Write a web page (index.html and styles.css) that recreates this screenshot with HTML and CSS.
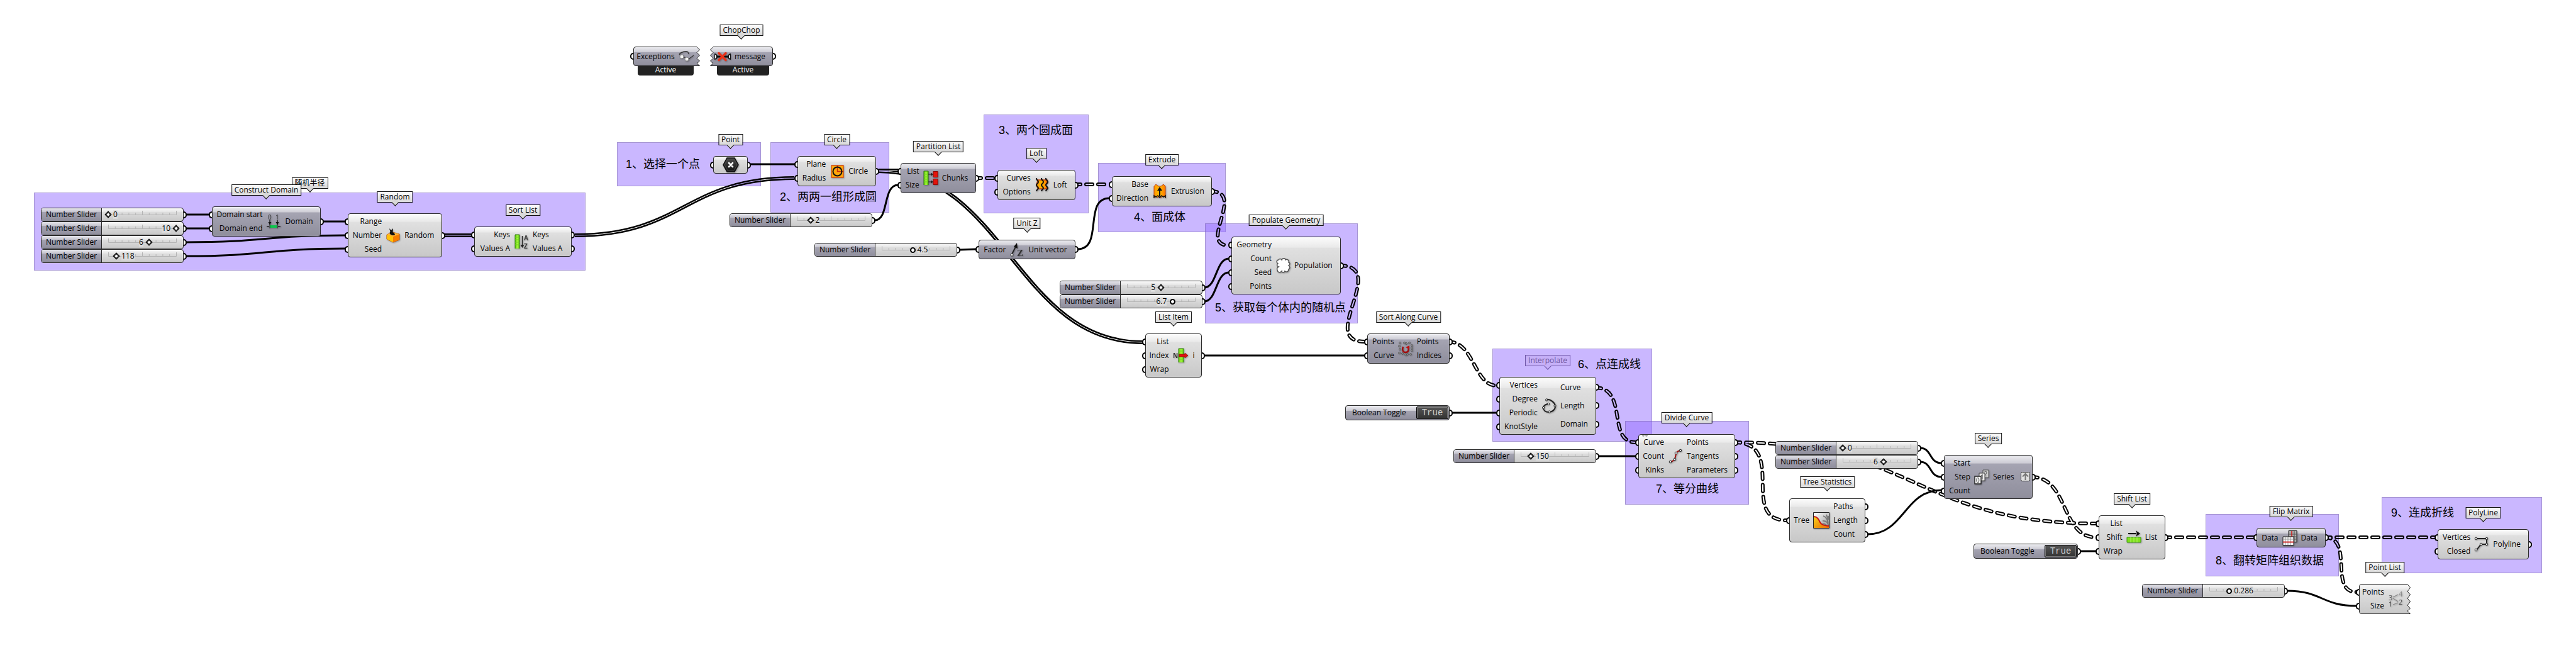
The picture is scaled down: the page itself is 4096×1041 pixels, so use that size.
FILE: index.html
```html
<!DOCTYPE html>
<html lang="zh-CN">
<head>
<meta charset="utf-8">
<meta name="viewport" content="width=device-width, initial-scale=1">
<title>Grasshopper definition</title>
<link rel="stylesheet" href="styles.css">
</head>
<body>
<svg class="defs" aria-hidden="true">
  <defs>
    <linearGradient id="g-dark" x1="0" y1="0" x2="0" y2="1">
      <stop offset="0" stop-color="#ececf0"/><stop offset=".28" stop-color="#cccbd4"/>
      <stop offset=".29" stop-color="#a5a4b2"/><stop offset="1" stop-color="#8f8e9c"/>
    </linearGradient>
    <linearGradient id="g-light" x1="0" y1="0" x2="0" y2="1">
      <stop offset="0" stop-color="#fcfcfc"/><stop offset=".18" stop-color="#e9e9e9"/>
      <stop offset=".19" stop-color="#e0e0e0"/><stop offset="1" stop-color="#c8c8c8"/>
    </linearGradient>
    <linearGradient id="g-green" x1="0" y1="0" x2="1" y2="0">
      <stop offset="0" stop-color="#5fc70c"/><stop offset=".5" stop-color="#a4f83a"/><stop offset="1" stop-color="#5fc70c"/>
    </linearGradient>
    <linearGradient id="g-orange" x1="0" y1="0" x2="1" y2="0">
      <stop offset="0" stop-color="#ff9a00"/><stop offset=".5" stop-color="#ffb700"/><stop offset="1" stop-color="#ff7a00"/>
    </linearGradient>
    <linearGradient id="g-hex" x1="0" y1="0" x2="0" y2="1">
      <stop offset="0" stop-color="#4a4a4a"/><stop offset="1" stop-color="#111"/>
    </linearGradient>
    <linearGradient id="g-sky" x1="0" y1="0" x2="1" y2="1">
      <stop offset="0" stop-color="#fff"/><stop offset="1" stop-color="#999"/>
    </linearGradient>
    <linearGradient id="g-sun" x1="0" y1="0" x2="1" y2="1">
      <stop offset="0" stop-color="#f6d21c"/><stop offset="1" stop-color="#e86a00"/>
    </linearGradient>
  </defs>
  <symbol id="ticks" viewBox="0 0 109 7">
    <path d="M.5 0V6.5H108.5V0M54.5 0V6M11.3 3v3M22.1 3v3M32.9 3v3M43.7 3v3M65.3 3v3M76.1 3v3M86.9 3v3M97.7 3v3" fill="none" stroke="#b4b4b4"/>
  </symbol>
  <symbol id="i-random" viewBox="0 0 24 24">
    <path d="M2 11l9-4 11 3v9l-10 4-10-5z" fill="#ff9d00" stroke="#b04800"/>
    <path d="M2 11l10 3v9l-10-5z" fill="#ffc107"/><path d="M12 14l10-4v9l-10 4z" fill="#f57c00"/>
    <path d="M2 11l9-4 11 3-10 4z" fill="#ffb338"/>
    <path d="M6 1l3 3 3-3-.5 6c3 1 4 4 3 5h-4c-2-1-4-2-4-4l1-2z" fill="#111"/>
  </symbol>
  <symbol id="i-glasses" viewBox="0 0 24 24">
    <path d="M1 8C4 5 12 2 15 5l1 3M1 8l3 3M9 13l4 2M16 16l8-6" fill="none" stroke="#333" stroke-width="1.300"/>
    <circle cx="5" cy="12" r="3" fill="#f2f2f2" stroke="#888"/><circle cx="13" cy="16" r="3" fill="#f2f2f2" stroke="#888"/>
  </symbol>
  <symbol id="i-chop" viewBox="0 0 26 24">
    <path d="M2 12h22" stroke="#111" stroke-width="3"/>
    <path d="M0 8a4 4 0 0 1 0 8zM26 8a4 4 0 0 0 0 8z" fill="#fff" stroke="#111" stroke-width="2"/>
    <path d="M7 6.500l11 11M18 6.500l-11 11" stroke="#e8321a" stroke-width="3.500" stroke-linecap="round"/>
  </symbol>
  <symbol id="i-point" viewBox="0 0 26 24">
    <path d="M7 1h12l6 11-6 11H7L1 12z" fill="url(#g-hex)" stroke="#111" stroke-width="1.500"/>
    <path d="M8 3h10l5 9-5 9H8l-5-9z" fill="none" stroke="#555" stroke-width=".7"/>
    <path d="M10 9l6 6M16 9l-6 6" stroke="#fff" stroke-width="2.600" stroke-linecap="round"/>
  </symbol>
  <symbol id="i-circle" viewBox="0 0 24 24">
    <path d="M3 3h19v19H3z" fill="#ffa60a" stroke="#d24a0c" stroke-width="1.300"/>
    <path d="M12.500 3v9.500H22" fill="none" stroke="#c62d0c" stroke-width="1.500"/>
    <circle cx="12.500" cy="12.500" r="7" fill="none" stroke="#111" stroke-width="2"/>
  </symbol>
  <symbol id="i-partition" viewBox="0 0 24 24">
    <path d="M1 1h7v22H1z" fill="url(#g-green)"/><path d="M1 23V1h7v22" fill="none" stroke="#2c7a0c"/>
    <path d="M1 6h7M1 10h7M1 14h7M1 18h7" stroke="#6fd020"/>
    <path d="M16 1.500h7v9h-7zM16 13.500h7v9h-7z" fill="#e3120b" stroke="#8c0a06"/>
    <path d="M8 6h5M8 18h5" stroke="#222"/><path d="M12 3.500l4 2.500-4 2.500zM12 15.500l4 2.500-4 2.500z" fill="#222"/>
  </symbol>
  <symbol id="i-loft" viewBox="0 0 24 24">
    <path d="M5 4h15c1 3-2 5-2 8 0 2 2 3 2 6H5c1-2-2-3-2-6s2-4 2-8z" fill="url(#g-orange)" stroke="#c2410c" stroke-width="1.500"/>
    <path d="M3 1c-1 3 3 3 3 6s-3 3-3 5 3 3 3 5-3 2-3 5M11 1c-1 3 3 3 3 6s-3 3-3 5 3 3 3 5-3 2-3 5M18 1c-1 3 3 3 3 6s-3 3-3 5 3 3 3 5-3 2-3 5" fill="none" stroke="#111" stroke-width="2"/>
  </symbol>
  <symbol id="i-extrude" viewBox="0 0 24 24">
    <path d="M3 4l3-3 4 3h4l4-3 3 3v18l-3-3-4 3-3-2-3 2-3-3-2 3z" fill="url(#g-orange)" stroke="#c2410c"/>
    <path d="M3 23v-4l3 2 3-2 3 3 3-3 3 2 3-2v4" fill="none" stroke="#111" stroke-width="1.500"/>
    <path d="M12 20V9" stroke="#111" stroke-width="2"/><path d="M8 11h8l-4-6z" fill="#111"/>
  </symbol>
  <symbol id="i-populate" viewBox="0 0 24 24">
    <path d="M5 3c1-2 4-2 5 0 1-3 6-3 6 0 3-2 6 1 5 4 3 1 2 4 0 5 3 2 2 5 0 6 0 4-4 5-6 3-1 3-5 2-5 0-2 3-7 2-7-2-1-2 0-4 2-5-3-1-3-4-1-5-3-2-2-6 1-6z" fill="#fff" stroke="#555" stroke-width="1.500"/>
  </symbol>
  <symbol id="i-along" viewBox="0 0 24 24">
    <g fill="#ddd" stroke="#444"><circle cx="3" cy="3" r="1.300"/><circle cx="10" cy="3" r="1.300"/><circle cx="13" cy="4" r="1.300"/><circle cx="18" cy="3" r="1.300"/><circle cx="2" cy="8" r="1.300"/><circle cx="22" cy="7" r="1.300"/><circle cx="22" cy="11" r="1.300"/><circle cx="3" cy="13" r="1.300"/><circle cx="22" cy="15" r="1.300"/><circle cx="2" cy="19" r="1.300"/><circle cx="7" cy="20" r="1.300"/><circle cx="12" cy="22" r="1.300"/><circle cx="15" cy="21" r="1.300"/><circle cx="20" cy="21" r="1.300"/></g>
    <path d="M8 9c-2 6 0 9 4 9s6-4 4-9" fill="none" stroke="#a00d0d" stroke-width="2.400"/><path d="M12 10l6-3v6z" fill="#c01010"/>
  </symbol>
  <symbol id="i-interp" viewBox="0 0 24 24">
    <path d="M8 2c6-1 14 5 14 11 0 5-5 9-10 9-6 0-9-3-9-7 0-3 4-6 8-6" fill="none" stroke="#222" stroke-width="2"/>
    <g fill="#fff" stroke="#222"><circle cx="8" cy="2.500" r="1.600"/><circle cx="21.500" cy="12" r="1.600"/><circle cx="12.500" cy="21.500" r="1.600"/><circle cx="3" cy="15" r="1.600"/><circle cx="11" cy="9" r="1.600"/></g>
  </symbol>
  <symbol id="i-divide" viewBox="0 0 24 24">
    <path d="M4 21c5-1 7-3 8-8s1-9 8-10" fill="none" stroke="#a01010" stroke-width="2"/>
    <g fill="#fff" stroke="#222"><circle cx="4" cy="21" r="1.800"/><circle cx="11" cy="17" r="1.800"/><circle cx="13" cy="7" r="1.800"/><circle cx="20" cy="3" r="1.800"/></g>
  </symbol>
  <symbol id="i-tree" viewBox="0 0 26 26">
    <path d="M1 1h24v24H1z" fill="url(#g-sky)"/>
    <path d="M25 24c-1-8-5-11-10-10M24 20c-1-8-4-13-8-14M24 18c-1-6-1-10-3-14M25 12l-1-6M22 22c-3-4-6-4-8-3" fill="none" stroke="#777" stroke-width="1.700"/>
    <path d="M1 7c6 0 8 5 10 9s6 5 14 6v3H1z" fill="url(#g-sun)"/>
    <path d="M1 7c6 0 8 5 10 9s6 5 14 6" fill="none" stroke="#c81414" stroke-width="2"/>
    <path d="M.500.500h25v25H.500z" fill="none" stroke="#222"/>
  </symbol>
  <symbol id="i-shift" viewBox="0 0 24 24">
    <path d="M3 6h13" stroke="#111" stroke-width="2"/><path d="M15 1l7 5-7 5 2-5z" fill="#111"/>
    <path d="M1 12h22v8H1z" fill="#7fe01c" stroke="#3c9a10"/><path d="M7 12v8M12 12v8M17 12v8" stroke="#b2f56a"/>
  </symbol>
  <symbol id="i-flip" viewBox="0 0 24 24">
    <path d="M10 .500h13v18H10z" fill="#aaa" stroke="#222"/><path d="M10 6h13M10 10h13M10 14h13M19 1v17" stroke="#555"/><path d="M15 1v9" stroke="#d01818" stroke-width="1.500"/>
    <path d="M1 10h17v13.500H1z" fill="#f4f4f4" stroke="#222"/><path d="M5 10v13M9 10v13M13 10v13M1 14h17" stroke="#999"/><path d="M1 18.500h17" stroke="#d01818" stroke-width="1.800"/>
  </symbol>
  <symbol id="i-poly" viewBox="0 0 24 24">
    <path d="M3 3h17v9h-9L4 21" fill="none" stroke="#222" stroke-width="2"/>
    <g fill="#fff" stroke="#222"><circle cx="3" cy="3" r="1.800"/><circle cx="20" cy="3" r="1.800"/><circle cx="20" cy="12" r="1.800"/><circle cx="11" cy="12" r="1.800"/><circle cx="3" cy="21" r="1.800"/></g>
  </symbol>
</svg>

<main class="canvas">
  <section class="group at-g0"><span class="tag group-tag">随机半径</span></section>
  <section class="group at-g1"></section>
  <section class="group at-g2"></section>
  <section class="group at-g3"></section>
  <section class="group at-g4"></section>
  <section class="group at-g5"></section>
  <section class="group at-g6"></section>
  <section class="group at-g7"></section>
  <section class="group at-g8"></section>
  <section class="group at-g9"></section>

  <svg class="wires" aria-hidden="true">
    <defs>
      <g id="double-paths">
        <path d="M707 374H750"/>
        <path d="M914 374C1088 374 1088 283 1263 283"/>
        <path d="M1397 271H1428"/>
        <path d="M1397 272C1597 272 1616 544 1817 544"/>
      </g>
      <g id="dash-paths">
        <path d="M1550 283H1582"/>
        <path d="M1708 293H1764"/>
        <path d="M1925 304C1982 304 1904 390 1954 390"/>
        <path d="M2130 422C2210 422 2094 543 2170 543"/>
        <path d="M2303 543C2344 543 2344 613 2380 613"/>
        <path d="M2536 616C2590 616 2554 703 2601 703"/>
        <path d="M2757 703C2844 703 2764 827 2841 827"/>
        <path d="M2757 703C3044 703 3048 832 3333 832"/>
        <path d="M3230 758C3290 758 3276 854 3333 854"/>
        <path d="M3441 854H3584"/>
        <path d="M3696 854H3872"/>
        <path d="M3696 854C3744 854 3702 941 3747 941"/>
      </g>
      <mask id="double-mask" maskUnits="userSpaceOnUse" x="0" y="0" width="100%" height="100%">
        <use href="#double-paths" class="casing casing-double"/><use href="#double-paths" class="core core-double"/>
      </mask>
      <mask id="dash-mask" maskUnits="userSpaceOnUse" x="0" y="0" width="100%" height="100%">
        <use href="#dash-paths" class="casing casing-dash"/><use href="#dash-paths" class="core core-dash"/>
      </mask>
    </defs>
    <rect width="100%" height="100%" mask="url(#double-mask)"/>
    <rect width="100%" height="100%" mask="url(#dash-mask)"/>
    <g class="single">
      <path d="M296 341H333M296 363H333M514 352H549"/>
      <path d="M296 385C422 385 422 374 549 374"/>
      <path d="M296 407C422 407 422 395 549 395"/>
      <path d="M1193 261H1264"/>
      <path d="M1391 350C1414 350 1403 294 1428 294"/>
      <path d="M1526 397L1552 396"/>
      <path d="M1714 396C1755 396 1722 315 1764 315"/>
      <path d="M1915 457C1935 457 1933 411 1954 411"/>
      <path d="M1915 479C1935 479 1933 433 1954 433"/>
      <path d="M1915 565H2170M2309 656H2380M2542 725H2601"/>
      <path d="M3053 712C3072 712 3067 736 3087 736"/>
      <path d="M3053 734C3072 734 3067 758 3087 758"/>
      <path d="M2970 849C3028 849 3028 779 3087 779"/>
      <path d="M3308 876H3333"/>
      <path d="M3637 939C3692 939 3692 963 3747 963"/>
    </g>
  </svg>

  <h2 class="note at-t1">1、选择一个点</h2>
  <h2 class="note at-t2">2、两两一组形成圆</h2>
  <h2 class="note at-t3">3、两个圆成面</h2>
  <h2 class="note at-t4">4、面成体</h2>
  <h2 class="note at-t5">5、获取每个体内的随机点</h2>
  <h2 class="note at-t6">6、点连成线</h2>
  <h2 class="note at-t7">7、等分曲线</h2>
  <h2 class="note at-t8">8、翻转矩阵组织数据</h2>
  <h2 class="note at-t9">9、连成折线</h2>

  <div class="slider at-s1"><label for="s1">Number Slider</label><svg class="ticks"><use href="#ticks"/></svg><input id="s1" type="range" value="0"><output for="s1" class="after" style="--p:0">0</output></div>
  <div class="slider at-s2"><label for="s2">Number Slider</label><svg class="ticks"><use href="#ticks"/></svg><input id="s2" type="range" value="100"><output for="s2" class="before" style="--p:100">10</output></div>
  <div class="slider at-s3"><label for="s3">Number Slider</label><svg class="ticks"><use href="#ticks"/></svg><input id="s3" type="range" value="60"><output for="s3" class="before" style="--p:60">6</output></div>
  <div class="slider at-s4"><label for="s4">Number Slider</label><svg class="ticks"><use href="#ticks"/></svg><input id="s4" type="range" value="12"><output for="s4" class="after" style="--p:12">118</output></div>
  <div class="slider at-s5"><label for="s5">Number Slider</label><svg class="ticks"><use href="#ticks"/></svg><input id="s5" type="range" value="20"><output for="s5" class="after" style="--p:20">2</output></div>
  <div class="slider real at-s6"><label for="s6">Number Slider</label><svg class="ticks"><use href="#ticks"/></svg><input id="s6" type="range" value="45"><output for="s6" class="after" style="--p:45">4.5</output></div>
  <div class="slider at-s7"><label for="s7">Number Slider</label><svg class="ticks"><use href="#ticks"/></svg><input id="s7" type="range" value="50"><output for="s7" class="before" style="--p:50">5</output></div>
  <div class="slider real at-s8"><label for="s8">Number Slider</label><svg class="ticks"><use href="#ticks"/></svg><input id="s8" type="range" value="67"><output for="s8" class="before" style="--p:67">6.7</output></div>
  <div class="slider at-s9"><label for="s9">Number Slider</label><svg class="ticks"><use href="#ticks"/></svg><input id="s9" type="range" value="15"><output for="s9" class="after" style="--p:15">150</output></div>
  <div class="slider at-s10"><label for="s10">Number Slider</label><svg class="ticks"><use href="#ticks"/></svg><input id="s10" type="range" value="0"><output for="s10" class="after" style="--p:0">0</output></div>
  <div class="slider at-s11"><label for="s11">Number Slider</label><svg class="ticks"><use href="#ticks"/></svg><input id="s11" type="range" value="60"><output for="s11" class="before" style="--p:60">6</output></div>
  <div class="slider real at-s12"><label for="s12">Number Slider</label><svg class="ticks"><use href="#ticks"/></svg><input id="s12" type="range" value="29"><output for="s12" class="after" style="--p:29">0.286</output></div>

  <div class="toggle at-b1"><span id="b1">Boolean Toggle</span><button type="button" aria-labelledby="b1">True</button></div>
  <div class="toggle at-b2"><span id="b2">Boolean Toggle</span><button type="button" aria-labelledby="b2">True</button></div>

  <article class="node single-row torn at-exceptions">
    <svg class="shape" viewBox="0 0 106 31"><path d="M4 .500H101L105.500 5 101 9.500 105.500 14 101 18.500 105.500 23 101 27 105.500 30.500H4Q.500 30.500.500 27V4Q.500.500 4 .500z" fill="url(#g-dark)" stroke="#2b2b2b"/></svg>
    <ul class="in"><li>Exceptions</li></ul><svg class="icon"><use href="#i-glasses"/></svg>
    <p class="state">Active</p>
  </article>
  <article class="node single-row torn at-message">
    <span class="tag">ChopChop</span>
    <svg class="shape" viewBox="0 0 100 31"><path d="M5 .500H96Q99.500.500 99.500 4V27Q99.500 30.500 96 30.500H.500L5 27 .500 23 5 18.500.500 14 5 9.500.500 5z" fill="url(#g-dark)" stroke="#2b2b2b"/></svg>
    <svg class="icon wide"><use href="#i-chop"/></svg><ul class="out"><li>message</li></ul>
    <p class="state">Active</p>
  </article>

  <article class="node dark at-domain"><span class="tag">Construct Domain</span>
    <ul class="in"><li>Domain start</li><li>Domain end</li></ul>
    <svg class="icon" viewBox="0 0 24 24">
      <text x="3" y="9" font-size="10" fill="#333">0</text><text x="15" y="9" font-size="10" fill="#333">1</text>
      <path d="M6 10v7M18 10v7M1 20h4M19 20h4" stroke="#222" stroke-width="1.5"/>
      <path d="M3.500 13h5L6 17zM15.500 13h5L18 17z" fill="#111"/>
      <path d="M6 18h12v4H6z" fill="#0fc44e"/><path d="M6 17v6M18 17v6" stroke="#222"/>
    </svg>
    <ul class="out"><li>Domain</li></ul></article>
  <article class="node at-random"><span class="tag">Random</span>
    <ul class="in"><li>Range</li><li>Number</li><li>Seed</li></ul><svg class="icon"><use href="#i-random"/></svg><ul class="out"><li>Random</li></ul></article>
  <article class="node at-sort"><span class="tag">Sort List</span>
    <ul class="in"><li>Keys</li><li>Values A</li></ul>
    <svg class="icon" viewBox="0 0 24 24">
      <path d="M2 1h7v22H2z" fill="url(#g-green)"/><path d="M2 23V1h7v22" fill="none" stroke="#2c7a0c"/>
      <path d="M2 5h7M2 9h7M2 13h7M2 17h7" stroke="#6fd020"/>
      <path d="M13.500 3v15" stroke="#222" stroke-width="1.500"/><path d="M10.500 17h6l-3 5z" fill="#222"/>
      <text x="16" y="10" font-size="10" font-weight="700" fill="#444">A</text><text x="16" y="23" font-size="10" font-weight="700" fill="#333">Z</text>
    </svg>
    <ul class="out"><li>Keys</li><li>Values A</li></ul></article>
  <article class="node param at-point"><span class="tag">Point</span>
    <ul class="in"><li></li></ul><svg class="icon wide"><use href="#i-point"/></svg><ul class="out"><li></li></ul></article>
  <article class="node at-circle"><span class="tag">Circle</span>
    <ul class="in"><li>Plane</li><li>Radius</li></ul><svg class="icon"><use href="#i-circle"/></svg><ul class="out"><li>Circle</li></ul></article>
  <article class="node dark at-partition"><span class="tag">Partition List</span>
    <ul class="in"><li>List</li><li>Size</li></ul><svg class="icon"><use href="#i-partition"/></svg><ul class="out"><li>Chunks</li></ul></article>
  <article class="node at-loft"><span class="tag">Loft</span>
    <ul class="in"><li>Curves</li><li>Options</li></ul><svg class="icon"><use href="#i-loft"/></svg><ul class="out"><li>Loft</li></ul></article>
  <article class="node at-extrude"><span class="tag">Extrude</span>
    <ul class="in"><li>Base</li><li>Direction</li></ul><svg class="icon"><use href="#i-extrude"/></svg><ul class="out"><li>Extrusion</li></ul></article>
  <article class="node dark single-row at-unitz"><span class="tag">Unit Z</span>
    <ul class="in"><li>Factor</li></ul>
    <svg class="icon" viewBox="0 0 24 24">
      <path d="M4 19L11 5" stroke="#222" stroke-width="2"/><path d="M12 1l1 9-6-3z" fill="#111"/>
      <circle cx="4" cy="20" r="2" fill="#fff" stroke="#333"/>
      <text class="serif" x="12" y="22" font-size="15" font-weight="700" fill="#333">Z</text>
    </svg>
    <ul class="out"><li>Unit vector</li></ul></article>
  <article class="node at-populate"><span class="tag">Populate Geometry</span>
    <ul class="in"><li>Geometry</li><li>Count</li><li>Seed</li><li>Points</li></ul><svg class="icon"><use href="#i-populate"/></svg><ul class="out"><li>Population</li></ul></article>
  <article class="node at-item"><span class="tag">List Item</span>
    <ul class="in"><li>List</li><li>Index</li><li>Wrap</li></ul>
    <svg class="icon wide" viewBox="0 0 26 24">
      <path d="M9 1h8v22H9z" fill="url(#g-green)"/><path d="M9 23V1h8v22" fill="none" stroke="#2c7a0c"/>
      <path d="M9 5h8M9 18h8" stroke="#6fd020"/>
      <path d="M10 10h9V8l5 4-5 4v-2h-9z" fill="#e01010" stroke="#8c0a06" stroke-width=".7"/>
      <text x="0" y="16" font-size="10" font-weight="700" fill="#333">N</text>
    </svg>
    <ul class="out"><li>i</li></ul></article>
  <article class="node dark at-along"><span class="tag">Sort Along Curve</span>
    <ul class="in"><li>Points</li><li>Curve</li></ul><svg class="icon"><use href="#i-along"/></svg><ul class="out"><li>Points</li><li>Indices</li></ul></article>
  <article class="node at-interp"><span class="tag faded">Interpolate</span>
    <ul class="in"><li>Vertices</li><li>Degree</li><li>Periodic</li><li>KnotStyle</li></ul><svg class="icon"><use href="#i-interp"/></svg><ul class="out"><li>Curve</li><li>Length</li><li>Domain</li></ul></article>
  <article class="node at-divide"><span class="tag">Divide Curve</span>
    <svg class="dots" viewBox="0 0 9 4"><path d="M0 0h4a2 3 0 0 1-4 0zM5 0h4a2 3 0 0 1-4 0z" fill="#aaa"/></svg>
    <ul class="in"><li>Curve</li><li>Count</li><li>Kinks</li></ul><svg class="icon"><use href="#i-divide"/></svg><ul class="out"><li>Points</li><li>Tangents</li><li>Parameters</li></ul></article>
  <article class="node at-tree"><span class="tag">Tree Statistics</span>
    <ul class="in"><li>Tree</li></ul><svg class="icon large"><use href="#i-tree"/></svg><ul class="out"><li>Paths</li><li>Length</li><li>Count</li></ul></article>
  <article class="node dark graft at-series"><span class="tag">Series</span>
    <ul class="in"><li>Start</li><li>Step</li><li>Count</li></ul>
    <svg class="icon" viewBox="0 0 24 24">
      <path d="M14 1h9v12h-9z" fill="#ccc" stroke="#555"/><text x="15.500" y="11" font-size="10" fill="#555">2</text>
      <path d="M8 6h9v12H8z" fill="#e8e8e8" stroke="#444"/><text x="10" y="16" font-size="10" fill="#333">1</text>
      <path d="M1 11h10v12H1z" fill="#f8f8f8" stroke="#222" stroke-width="1.400"/><text x="3" y="21" font-size="10" fill="#111">0</text>
    </svg>
    <ul class="out"><li>Series</li></ul>
    <svg class="graft-mark" viewBox="0 0 15 15"><rect x=".5" y=".5" width="14" height="14" rx="2" fill="#e2e2e2" stroke="#333"/><path d="M7.500 13V3M3 7.500L7.500 3 12 7.500" fill="none" stroke="#777" stroke-width="2"/></svg></article>
  <article class="node at-shift"><span class="tag">Shift List</span>
    <ul class="in"><li>List</li><li>Shift</li><li>Wrap</li></ul><svg class="icon"><use href="#i-shift"/></svg><ul class="out"><li>List</li></ul></article>
  <article class="node dark single-row at-flip"><span class="tag">Flip Matrix</span>
    <ul class="in"><li>Data</li></ul><svg class="icon"><use href="#i-flip"/></svg><ul class="out"><li>Data</li></ul></article>
  <article class="node at-poly"><span class="tag">PolyLine</span>
    <ul class="in"><li>Vertices</li><li>Closed</li></ul><svg class="icon"><use href="#i-poly"/></svg><ul class="out"><li>Polyline</li></ul></article>
  <article class="node torn at-plist"><span class="tag">Point List</span>
    <svg class="shape" viewBox="0 0 82 48"><path d="M4 .500H77L81.500 6 77 12 81.500 17 77 23 81.500 28 77 34 81.500 39 77 43 81.500 47.500H4Q.500 47.500.500 44V4Q.500.500 4 .500z" fill="url(#g-light)" stroke="#2b2b2b"/></svg>
    <ul class="in"><li>Points</li><li>Size</li></ul>
    <svg class="icon large" viewBox="0 0 26 26">
      <path d="M8 10l8-4M8 12l8 5M8 22l8-3" stroke="#888" stroke-width="1.300"/>
      <text x="1" y="15" font-size="11" fill="#555">3</text><text x="17" y="9" font-size="11" fill="#888">4</text>
      <text x="1" y="25" font-size="11" fill="#333">1</text><text x="17" y="22" font-size="11" fill="#444">2</text>
    </svg></article>
</main>
</body>
</html>
```
FILE: styles.css
```css
*, *::before, *::after { box-sizing: border-box; }

body {
  margin: 0;
  background: #fff;
  color: #000;
  font: 12px/22px "Open Sans", "Noto Sans", "Noto Sans CJK SC", sans-serif;
}

ul, p, h2 { margin: 0; padding: 0; list-style: none; }

.defs { position: absolute; width: 0; height: 0; }

.canvas { position: relative; min-height: 100vh; overflow: hidden; }

/* Everything on the canvas is a freely placed object */
.group, .wires, .note, .slider, .toggle, .node { position: absolute; }

.wires { left: 0; top: 0; width: 100%; height: 100%; }
.wires path { fill: none; }
.single { stroke: #000; stroke-width: 3; }
.casing { stroke: #fff; }
.core { stroke: #000; }
.casing-double { stroke-width: 6; }
.core-double { stroke-width: 1; }
.casing-dash { stroke-width: 6; }
.core-dash { stroke-width: 2; }
.casing-dash, .core-dash { stroke-dasharray: 10 9; stroke-linecap: round; }

.group {
  background: rgba(150, 112, 255, .5);
  border: 1px solid rgba(80, 70, 110, .3);
}

.note {
  font: 400 18px/24px "Liberation Sans", "Noto Sans CJK SC", sans-serif;
  white-space: nowrap;
}

/* Balloon captions */
.tag {
  position: absolute;
  left: 50%;
  bottom: calc(100% + 18px);
  transform: translateX(-50%);
  height: 18px;
  padding: 0 4px;
  border: 1px solid #111;
  background: linear-gradient(#fcfcfc, #d8d8d8);
  line-height: 16px;
  white-space: nowrap;
}
.tag::after {
  content: "";
  position: absolute;
  left: calc(50% - 4px);
  bottom: -5px;
  width: 8px;
  height: 8px;
  border: solid #111;
  border-width: 0 1px 1px 0;
  background: #d8d8d8;
  transform: rotate(45deg);
}
.group-tag { bottom: calc(100% + 7px); }
.faded { border-color: #6d55a8; background: #c6b0f8; color: #6d559c; }
.faded::after { border-color: #6d55a8; background: #c6b0f8; }

/* Components */
.node {
  display: flex;
  justify-content: center;
  gap: 6px;
  padding: 1px 12px 1px 7px;
  border: 1px solid #2b2b2b;
  border-radius: 4px;
  background: linear-gradient(#fcfcfc, #e9e9e9 18%, #e0e0e0 19%, #c8c8c8);
}
.dark { background: linear-gradient(#ececf0, #cccbd4 18%, #a5a4b2 19%, #8f8e9c); }
.single-row { min-height: 31px; }
.dark.single-row { background: linear-gradient(#ececf0, #cccbd4 28%, #a5a4b2 29%, #8f8e9c); }
.in, .out { display: flex; flex-direction: column; }
.in { text-align: right; }
.in li, .out li {
  display: flex;
  flex: 1;
  align-items: center;
  min-height: 22px;
  white-space: nowrap;
}
.in li { justify-content: flex-end; }
.icon {
  flex: none;
  align-self: center;
  width: 24px;
  height: 24px;
  filter: drop-shadow(1px 1px 1px rgba(0, 0, 0, .3));
}
.wide { width: 26px; }
.large { width: 26px; height: 26px; }
.serif { font-family: "Liberation Serif", serif; }
.param { padding: 1px 0; }

/* Half-round connection grips */
.in li::before, .out li::after, .slider::after, .toggle::after {
  content: "";
  position: absolute;
  width: 5px;
  height: 11px;
  border: 2px solid #000;
  background: #fff;
}
.in li::before { left: -6px; border-right: 0; border-radius: 6px 0 0 6px; }
.out li::after, .slider::after, .toggle::after {
  right: -6px;
  border-left: 0;
  border-radius: 0 6px 6px 0;
}
.slider::after { top: 5px; }

.torn { border-color: transparent; background: none; }
.shape { position: absolute; left: -1px; top: -1px; width: calc(100% + 2px); height: calc(100% + 2px); }
.torn > .icon { position: relative; }
.torn li { z-index: 1; }
.state {
  position: absolute;
  top: 100%;
  left: 6px;
  right: 9px;
  height: 16px;
  border-radius: 0 0 4px 4px;
  background: #222;
  color: #fff;
  line-height: 14px;
  text-align: center;
}
.dots { position: absolute; left: 5px; top: 0; width: 9px; height: 4px; }
.graft { padding-right: 28px; }
.graft-mark { position: absolute; right: 3px; top: calc(50% - 8px); width: 15px; height: 15px; }

/* Number sliders */
.slider {
  width: 227px;
  height: 22px;
  border: 1px solid #2b2b2b;
  border-radius: 4px;
  background: linear-gradient(#fafafa, #e6e6e6 28%, #dedede 29%, #c9c9c9);
  line-height: 20px;
}
.slider label {
  display: block;
  width: 96px;
  height: 20px;
  border-right: 1px solid #2b2b2b;
  border-radius: 3px 0 0 3px;
  background: linear-gradient(#e4e4ea, #c6c5cf 28%, #a5a4b2 29%, #8f8e9c);
  text-align: center;
}
.ticks { position: absolute; left: 106px; top: 4px; width: 109px; height: 7px; }
.slider input {
  position: absolute;
  left: 103px;
  top: 0;
  width: 114px;
  height: 20px;
  margin: 0;
  background: none;
  appearance: none;
}
.slider input::-webkit-slider-thumb {
  width: 6px;
  height: 6px;
  border: 1px solid #000;
  outline: 1px solid #000;
  background: #fff;
  appearance: none;
  transform: rotate(45deg);
}
.slider.real input { left: 102px; width: 117px; }
.slider.real input::-webkit-slider-thumb {
  width: 9px;
  height: 9px;
  border: 2px solid #000;
  border-radius: 50%;
  outline: 0;
}
.slider output {
  --x: calc(106px + var(--p) * 108px / 100);
  position: absolute;
  top: 3px;
  height: 14px;
  background: rgba(222, 222, 222, .8);
  line-height: 14px;
}
.after { left: calc(var(--x) + 8px); }
.before { right: calc(225px - var(--x) + 9px); }

/* Boolean toggles */
.toggle {
  display: flex;
  align-items: center;
  justify-content: space-between;
  width: 166px;
  height: 24px;
  padding: 0 1px 0 10px;
  border: 1px solid #2b2b2b;
  border-radius: 4px;
  background: linear-gradient(#ececf0, #cccbd4 35%, #a5a4b2 36%, #8f8e9c);
}
.toggle button {
  width: 51px;
  height: 20px;
  padding: 0;
  border: 1px solid #000;
  border-radius: 2px;
  background: linear-gradient(#555, #333);
  box-shadow: inset 0 0 0 1px #777;
  color: #ccc;
  font: 14px/16px "Courier New", "Liberation Mono", monospace;
}

/* Placement */
.at-g0 { left: 54px; top: 306px; width: 877px; height: 124px; }
.at-g1 { left: 981px; top: 226px; width: 229px; height: 70px; }
.at-g2 { left: 1225px; top: 226px; width: 189px; height: 112px; }
.at-g3 { left: 1564px; top: 182px; width: 167px; height: 157px; }
.at-g4 { left: 1746px; top: 259px; width: 203px; height: 110px; }
.at-g5 { left: 1916px; top: 355px; width: 243px; height: 159px; }
.at-g6 { left: 2373px; top: 554px; width: 254px; height: 148px; }
.at-g7 { left: 2584px; top: 669px; width: 197px; height: 133px; }
.at-g8 { left: 3507px; top: 817px; width: 212px; height: 99px; }
.at-g9 { left: 3787px; top: 790px; width: 255px; height: 121px; }

.at-t1 { left: 995px; top: 249px; }
.at-t2 { left: 1240px; top: 301px; }
.at-t3 { left: 1588px; top: 195px; }
.at-t4 { left: 1803px; top: 333px; }
.at-t5 { left: 1932px; top: 477px; }
.at-t6 { left: 2509px; top: 567px; }
.at-t7 { left: 2633px; top: 765px; }
.at-t8 { left: 3523px; top: 879px; }
.at-t9 { left: 3802px; top: 803px; }

.at-s1 { left: 65px; top: 330px; }
.at-s2 { left: 65px; top: 352px; }
.at-s3 { left: 65px; top: 374px; }
.at-s4 { left: 65px; top: 396px; }
.at-s5 { left: 1160px; top: 339px; }
.at-s6 { left: 1295px; top: 386px; }
.at-s7 { left: 1685px; top: 446px; }
.at-s8 { left: 1685px; top: 468px; }
.at-s9 { left: 2311px; top: 714px; }
.at-s10 { left: 2823px; top: 701px; }
.at-s11 { left: 2823px; top: 723px; }
.at-s12 { left: 3406px; top: 928px; }

.at-b1 { left: 2139px; top: 644px; }
.at-b2 { left: 3138px; top: 864px; }

.at-exceptions { left: 1007px; top: 74px; width: 106px; }
.at-message { left: 1129px; top: 74px; width: 100px; }
.at-message .state { left: 10px; right: 5px; }
.at-domain { left: 337px; top: 328px; width: 173px; }
.at-random { left: 553px; top: 339px; width: 150px; }
.at-sort { left: 754px; top: 360px; width: 155px; }
.at-point { left: 1134px; top: 248px; width: 55px; }
.at-circle { left: 1268px; top: 248px; width: 125px; }
.at-partition { left: 1432px; top: 259px; width: 120px; }
.at-loft { left: 1586px; top: 270px; width: 124px; }
.at-extrude { left: 1768px; top: 280px; width: 159px; }
.at-unitz { left: 1556px; top: 381px; width: 154px; }
.at-populate { left: 1958px; top: 376px; width: 174px; }
.at-item { left: 1821px; top: 530px; width: 90px; }
.at-along { left: 2174px; top: 530px; width: 131px; }
.at-interp { left: 2384px; top: 599px; width: 154px; }
.at-divide { left: 2605px; top: 690px; width: 154px; }
.at-tree { left: 2845px; top: 792px; width: 121px; }
.at-series { left: 3091px; top: 723px; width: 141px; }
.at-shift { left: 3337px; top: 819px; width: 106px; }
.at-flip { left: 3588px; top: 839px; width: 110px; }
.at-poly { left: 3876px; top: 841px; width: 145px; }
.at-plist { left: 3751px; top: 928px; width: 82px; }
```
